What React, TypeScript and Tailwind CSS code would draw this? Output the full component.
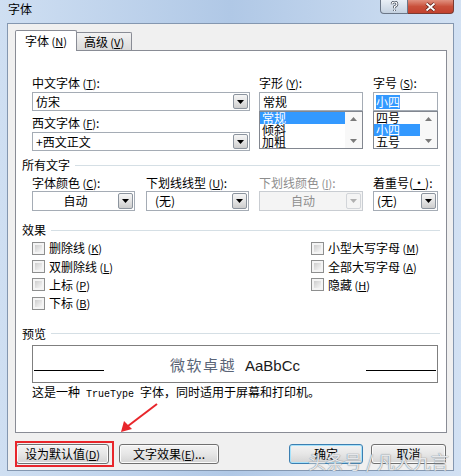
import React from "react";

// hotkey like (T) with underlined letter
const Key = ({ k }: { k: string }) => (
  <span className="text-[11px]">
    {" "}(<span className="underline">{k}</span>)
  </span>
);

const DropArrow = ({ disabled = false, tall = false }: { disabled?: boolean; tall?: boolean }) => (
  <div
    className={`w-[15px] ${tall ? "h-[16px]" : "h-[15px]"} rounded-[2px] border flex items-center justify-center ${
      disabled
        ? "border-[#d2d5d9] bg-[#f4f4f4]"
        : "border-[#8c949e] bg-linear-to-b from-[#f6f6f6] via-[#e4e4e4] to-[#cdcdcd]"
    }`}
  >
    <svg width="7" height="4" viewBox="0 0 7 4">
      <path d="M0 0h7L3.5 4z" fill={disabled ? "#b0b0b0" : "#000"} />
    </svg>
  </div>
);

const EditCombo = ({ value }: { value: string }) => (
  <div className="h-[19px] border border-[#a5acb5] bg-white flex items-center justify-between pl-[3px] pr-[1px]">
    <span className="leading-[15px]">{value}</span>
    <DropArrow />
  </div>
);

const Tri = ({ up }: { up?: boolean }) => (
  <svg width="7" height="4" viewBox="0 0 7 4">
    <path d={up ? "M0 4h7L3.5 0z" : "M0 0h7L3.5 4z"} fill="#7a7a7a" />
  </svg>
);

const ListBox = ({ items, sel }: { items: string[]; sel: number }) => (
  <div className="h-[38px] border border-[#828790] bg-white flex">
    <div className="flex-1 flex flex-col">
      {items.map((it, i) => (
        <div
          key={it}
          className={`h-[12px] leading-[12px] pl-[2px] ${i === sel ? "bg-[#3399ff] text-white" : ""}`}
        >
          {it}
        </div>
      ))}
    </div>
    <div className="w-[17px] flex flex-col justify-between items-center py-[5px] bg-[#f8f8f8]">
      <Tri up />
      <Tri />
    </div>
  </div>
);

const Heading = ({ text }: { text: string }) => (
  <div className="h-[16px] flex items-center gap-[5px] pr-[6px]">
    <span className="leading-[16px]">{text}</span>
    <div className="flex-1 h-px bg-[#d5dfe5]" />
  </div>
);

const Check = ({ label, k }: { label: string; k: string }) => (
  <div className="h-[18.4px] flex items-center">
    <div className="w-[13px] h-[13px] border border-[#8e8f8f] bg-[#f4f4f4] p-[2px]">
      <div className="w-full h-full bg-linear-to-br from-[#cdcdcd] to-[#f7f7f7]" />
    </div>
    <span className="ml-[4px] leading-[16px]">
      {label}
      <Key k={k} />
    </span>
  </div>
);

const Button = ({ children, w, primary = false }: { children: React.ReactNode; w: string; primary?: boolean }) => (
  <div
    className={`${w} h-[20px] rounded-[3px] border flex items-center justify-center bg-linear-to-b from-[#f3f3f3] via-[#e6e6e6] to-[#d3d3d3] ${
      primary
        ? "border-[#3c7fb1] shadow-[inset_0_0_0_1px_#a6e2fb]"
        : "border-[#707070] shadow-[inset_0_0_0_1px_#fbfbfb]"
    }`}
  >
    {children}
  </div>
);

export default function App() {
  return (
    <div className="w-[461px] h-[476px] overflow-hidden relative bg-linear-to-r from-[#cfdff2] via-[#b0c8e6] to-[#d2e1f3] font-['Noto_Sans_CJK_SC',sans-serif] text-[12px] text-black">
      {/* Title bar */}
      <div className="h-[23px] flex items-start justify-between pl-[8px] pr-[7px]">
        <span className="mt-[1px] leading-[16px]">字体</span>
        <div className="flex">
          <div className="w-[28px] h-[14px] rounded-bl-[4px] border border-t-0 border-[#6b7788] bg-linear-to-b from-[#e9eff6] to-[#c4d1e0] flex items-center justify-center">
            <svg width="9" height="11" viewBox="0 0 9 11">
              <path d="M2 3.2Q2 1 4.5 1T7 3.2Q7 4.6 4.5 5.6V7.2M4.5 8.8V10" stroke="#3c4656" strokeWidth="2.6" fill="none" />
              <path d="M2 3.2Q2 1 4.5 1T7 3.2Q7 4.6 4.5 5.6V7.2M4.5 8.8V10" stroke="#fff" strokeWidth="1.2" fill="none" />
            </svg>
          </div>
          <div className="w-[46px] h-[14px] rounded-br-[4px] border border-t-0 border-l-0 border-[#7a3a32] bg-linear-to-b from-[#e0907f] via-[#c9503b] to-[#c2412e] flex items-center justify-center">
            <svg width="13" height="10" viewBox="0 0 13 10">
              <path d="M2.5 1.5L10.5 8.5M10.5 1.5L2.5 8.5" stroke="#5a1d16" strokeWidth="3.4" />
              <path d="M2.5 1.5L10.5 8.5M10.5 1.5L2.5 8.5" stroke="#fff" strokeWidth="1.8" />
            </svg>
          </div>
        </div>
      </div>

      {/* Client area */}
      <div className="mx-[7px] h-[448px] border border-[#8497b0] bg-[#f0f0f0] pl-[7px] pt-[6px]">
        {/* Tabs */}
        <div className="flex items-end h-[20px]">
          <div className="relative z-10 w-[62px] h-[21px] -mb-px border border-b-0 border-[#898c95] rounded-t-[2px] bg-white flex items-center justify-center">
            <span className="leading-[16px]">
              字体
              <Key k="N" />
            </span>
          </div>
          <div className="w-[55px] h-[18px] border border-l-0 border-b-0 border-[#898c95] rounded-tr-[2px] bg-linear-to-b from-[#f3f3f3] to-[#dadada] flex items-center justify-center">
            <span className="leading-[16px]">
              高级
              <Key k="V" />
            </span>
          </div>
        </div>

        {/* Tab panel */}
        <div className="w-[432px] h-[383px] border border-[#898c95] bg-white pl-[6px] pt-[24px]">
          {/* Fonts row */}
          <div className="flex ml-[10px]">
            <div className="w-[218px]">
              <div className="h-[16px] leading-[16px]">
                中文字体
                <Key k="T" />:
              </div>
              <div className="mt-px">
                <EditCombo value="仿宋" />
              </div>
              <div className="h-[16px] leading-[16px] mt-[4px]">
                西文字体
                <Key k="F" />:
              </div>
              <div className="mt-px">
                <EditCombo value="+西文正文" />
              </div>
            </div>
            <div className="w-[104px] ml-[9px]">
              <div className="h-[16px] leading-[16px]">
                字形
                <Key k="Y" />:
              </div>
              <div className="mt-px h-[19px] border border-[#a5acb5] bg-white pl-[3px] leading-[17px]">常规</div>
              <ListBox items={["常规", "倾斜", "加粗"]} sel={0} />
            </div>
            <div className="w-[65px] ml-[10px]">
              <div className="h-[16px] leading-[16px]">
                字号
                <Key k="S" />:
              </div>
              <div className="mt-px h-[19px] border border-[#a5acb5] bg-white pl-[2px] flex items-center">
                <span className="bg-[#3399ff] text-white leading-[14px]">小四</span>
              </div>
              <ListBox items={["四号", "小四", "五号"]} sel={1} />
            </div>
          </div>

          {/* All text */}
          <div className="mt-[6px]">
            <Heading text="所有文字" />
          </div>
          <div className="flex ml-[10px] mt-[2px]">
            <div className="w-[103px]">
              <div className="h-[16px] leading-[16px] whitespace-nowrap">
                字体颜色
                <Key k="C" />:
              </div>
              <div className="h-[20px] border border-[#a5acb5] bg-white flex items-center pr-[1px]">
                <span className="flex-1 text-center">自动</span>
                <DropArrow tall />
              </div>
            </div>
            <div className="w-[103px] ml-[11px]">
              <div className="h-[16px] leading-[16px] whitespace-nowrap">
                下划线线型
                <Key k="U" />:
              </div>
              <div className="h-[20px] border border-[#a5acb5] bg-white flex items-center pr-[1px]">
                <span className="flex-1 pl-[8px]">(无)</span>
                <DropArrow tall />
              </div>
            </div>
            <div className="w-[104px] ml-[10px] text-[#8d8d8d]">
              <div className="h-[16px] leading-[16px] whitespace-nowrap">
                下划线颜色
                <Key k="I" />:
              </div>
              <div className="h-[20px] border border-[#c9cdd2] bg-[#f4f4f4] flex items-center pr-[1px]">
                <span className="flex-1 text-center">自动</span>
                <DropArrow tall disabled />
              </div>
            </div>
            <div className="w-[65px] ml-[10px]">
              <div className="h-[16px] leading-[16px] whitespace-nowrap">
                着重号(<span className="underline">·</span>):
              </div>
              <div className="h-[20px] border border-[#a5acb5] bg-white flex items-center pr-[1px]">
                <span className="flex-1 pl-[3px]">(无)</span>
                <DropArrow tall />
              </div>
            </div>
          </div>

          {/* Effects */}
          <div className="mt-[11px]">
            <Heading text="效果" />
          </div>
          <div className="flex ml-[10px] mt-[1px]">
            <div className="w-[279px]">
              <Check label="删除线" k="K" />
              <Check label="双删除线" k="L" />
              <Check label="上标" k="P" />
              <Check label="下标" k="B" />
            </div>
            <div>
              <Check label="小型大写字母" k="M" />
              <Check label="全部大写字母" k="A" />
              <Check label="隐藏" k="H" />
            </div>
          </div>

          {/* Preview */}
          <div className="mt-[13px]">
            <Heading text="预览" />
          </div>
          <div className="ml-[10px] mt-[3px] w-[406px] h-[38px] border border-[#7f7f7f] bg-white flex items-end px-px pb-[11px]">
            <div className="w-[70px] h-px bg-black" />
            <div className="flex-1 flex justify-center items-baseline gap-[9px] -mb-[3px]">
              <span className="text-[15px] leading-[16px] tracking-[1.5px] text-[#5b6577]">微软卓越</span>
              <span className="font-['Liberation_Sans',sans-serif] text-[15px] leading-[16px] text-[#1a1a1a]">AaBbCc</span>
            </div>
            <div className="w-[70px] h-px bg-black" />
          </div>
          <div className="ml-[10px] mt-px h-[16px] leading-[16px] whitespace-nowrap">
            这是一种
            <span className="font-['Liberation_Mono',monospace] text-[10px]"> TrueType </span>
            字体，同时适用于屏幕和打印机。
          </div>
        </div>

        {/* Buttons */}
        <div className="mt-[11px] ml-px w-[430px] flex justify-between">
          <div className="flex gap-[10px]">
            <Button w="w-[93px]">
              设为默认值
              <Key k="D" />
            </Button>
            <Button w="w-[100px]">
              文字效果
              <Key k="E" />
              ...
            </Button>
          </div>
          <div className="flex gap-[8px]">
            <Button w="w-[74px]" primary>
              确定
            </Button>
            <Button w="w-[75px]">取消</Button>
          </div>
        </div>
      </div>

      {/* Annotation: red box + arrow */}
      <div className="absolute left-[15px] top-[441px] w-[99px] h-[26px] border-2 border-[#e8262b]" />
      <svg className="absolute left-0 top-0" width="461" height="476" viewBox="0 0 461 476">
        <path d="M157 404L128 426" stroke="#e8262b" strokeWidth="2" />
        <path d="M121 432L124 421L132 429z" fill="#e8262b" />
      </svg>

      {/* Watermark */}
      <div className="absolute left-[308px] top-[450px] text-[18px] leading-[22px] text-white/80 whitespace-nowrap [text-shadow:0_0_1px_#7d8793,0_0_1px_#7d8793]">
        头条号 / 凡人九言
      </div>
    </div>
  );
}
